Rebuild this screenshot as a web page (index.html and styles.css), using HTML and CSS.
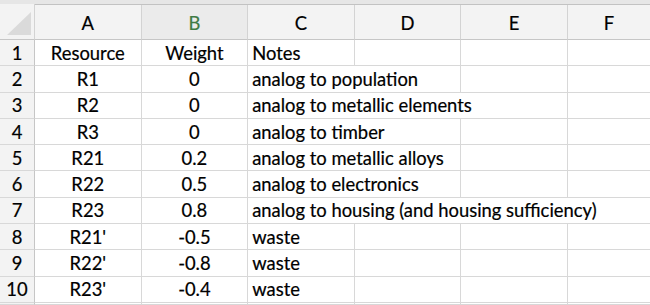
FILE: index.html
```html
<!DOCTYPE html>
<html lang="en">
<head>
    <meta charset="UTF-8">
    <title>Resource Weights</title>
    <link rel="stylesheet" href="styles.css">
</head>
<body>
    <div class="sheet">
        <!-- Column headers -->
        <div class="corner"><span class="tri"></span></div>
        <div class="colhead">A</div>
        <div class="colhead selected">B</div>
        <div class="colhead">C</div>
        <div class="colhead">D</div>
        <div class="colhead">E</div>
        <div class="colhead last">F</div>

        <!-- Row 1 -->
        <div class="rowhead">1</div>
        <div class="cell center">Resource</div>
        <div class="cell center">Weight</div>
        <div class="cell">Notes</div>
        <div class="cell"></div>
        <div class="cell"></div>
        <div class="cell last"></div>

        <div class="rowhead">2</div>
        <div class="cell center">R1</div>
        <div class="cell center">0</div>
        <div class="cell span-2">analog to population</div>
        <div class="cell"></div>
        <div class="cell last"></div>

        <div class="rowhead">3</div>
        <div class="cell center">R2</div>
        <div class="cell center">0</div>
        <div class="cell span-3">analog to metallic elements</div>
        <div class="cell last"></div>

        <div class="rowhead">4</div>
        <div class="cell center">R3</div>
        <div class="cell center">0</div>
        <div class="cell span-2">analog to timber</div>
        <div class="cell"></div>
        <div class="cell last"></div>

        <div class="rowhead">5</div>
        <div class="cell center">R21</div>
        <div class="cell center">0.2</div>
        <div class="cell span-2">analog to metallic alloys</div>
        <div class="cell"></div>
        <div class="cell last"></div>

        <div class="rowhead">6</div>
        <div class="cell center">R22</div>
        <div class="cell center">0.5</div>
        <div class="cell span-2">analog to electronics</div>
        <div class="cell"></div>
        <div class="cell last"></div>

        <div class="rowhead">7</div>
        <div class="cell center">R23</div>
        <div class="cell center">0.8</div>
        <div class="cell span-4 last">analog to housing (and housing sufficiency)</div>

        <div class="rowhead">8</div>
        <div class="cell center">R21'</div>
        <div class="cell center">-0.5</div>
        <div class="cell">waste</div>
        <div class="cell"></div>
        <div class="cell"></div>
        <div class="cell last"></div>

        <div class="rowhead">9</div>
        <div class="cell center">R22'</div>
        <div class="cell center">-0.8</div>
        <div class="cell">waste</div>
        <div class="cell"></div>
        <div class="cell"></div>
        <div class="cell last"></div>

        <div class="rowhead">10</div>
        <div class="cell center">R23'</div>
        <div class="cell center">-0.4</div>
        <div class="cell">waste</div>
        <div class="cell"></div>
        <div class="cell"></div>
        <div class="cell last"></div>

        <div class="rowhead"></div>
        <div class="cell"></div>
        <div class="cell"></div>
        <div class="cell"></div>
        <div class="cell"></div>
        <div class="cell"></div>
        <div class="cell last"></div>
    </div>
</body>
</html>
```

FILE: styles.css
```css
body {
    margin: 0;
    background: #fff;
    font-family: Lato, "Open Sans", sans-serif;
    font-size: 18.4px;
    color: #000;
    -webkit-text-stroke: 0.2px #000;
    overflow: hidden;
}
.sheet {
    display: grid;
    grid-template-columns: 35px repeat(5, 106.6px) 1fr;
    grid-template-rows: 36px repeat(10, 26.3px) 1fr;
    width: 650px;
    height: 301px;
    border-top: 4px solid #e6e6e6;
    overflow: hidden;
    position: relative;
}
.sheet::before {
    content: "";
    position: absolute;
    left: 0;
    right: 0;
    top: -1px;
    height: 2px;
    background: #c2c2c2;
}
.corner,
.colhead {
    background: #f3f3f3;
    border-right: 1px solid #d3d3d3;
    border-bottom: 1px solid #c6c6c6;
}
.corner {
    position: relative;
}
.tri {
    position: absolute;
    right: 3px;
    bottom: 4px;
    width: 0;
    height: 0;
    border-left: 24px solid transparent;
    border-bottom: 23px solid #dadada;
}
.colhead {
    display: flex;
    align-items: center;
    justify-content: center;
    padding-top: 2px;
}
.colhead.selected {
    background: #ebebeb;
    color: #3f7b45;
    -webkit-text-stroke-color: #3f7b45;
}
.colhead.last,
.cell.last {
    border-right: none;
}
.rowhead {
    background: #f3f3f3;
    border-right: 1px solid #c6c6c6;
    border-bottom: 1px solid #d8d8d8;
    display: flex;
    align-items: center;
    justify-content: center;
}
.cell {
    border-right: 1px solid #d8d8d8;
    border-bottom: 1px solid #d8d8d8;
    display: flex;
    align-items: center;
    padding-left: 4px;
    white-space: nowrap;
    overflow: visible;
}
.cell.center {
    justify-content: center;
    padding-left: 0;
}
.span-2 { grid-column: span 2; }
.span-3 { grid-column: span 3; }
.span-4 { grid-column: span 4; }
```
